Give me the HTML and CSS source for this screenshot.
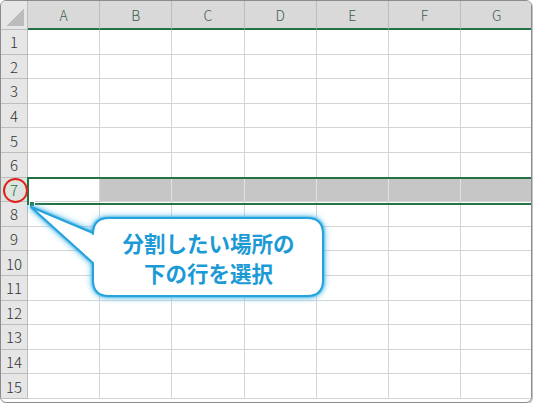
FILE: index.html
```html
<!DOCTYPE html>
<html lang="ja">

<head>
    <meta charset="utf-8">
    <title>行の選択</title>
    <link rel="stylesheet" href="styles.css">
</head>

<body>
    <div class="window">
        <div class="grid">
            <!-- header row -->
            <div class="corner"></div>
            <div class="ch">A</div><div class="ch">B</div><div class="ch">C</div><div class="ch">D</div><div class="ch">E</div><div class="ch">F</div><div class="ch">G</div>

            <div class="rh">1</div><div class="c"></div><div class="c"></div><div class="c"></div><div class="c"></div><div class="c"></div><div class="c"></div><div class="c"></div>
            <div class="rh">2</div><div class="c"></div><div class="c"></div><div class="c"></div><div class="c"></div><div class="c"></div><div class="c"></div><div class="c"></div>
            <div class="rh">3</div><div class="c"></div><div class="c"></div><div class="c"></div><div class="c"></div><div class="c"></div><div class="c"></div><div class="c"></div>
            <div class="rh">4</div><div class="c"></div><div class="c"></div><div class="c"></div><div class="c"></div><div class="c"></div><div class="c"></div><div class="c"></div>
            <div class="rh">5</div><div class="c"></div><div class="c"></div><div class="c"></div><div class="c"></div><div class="c"></div><div class="c"></div><div class="c"></div>
            <div class="rh">6</div><div class="c"></div><div class="c"></div><div class="c"></div><div class="c"></div><div class="c"></div><div class="c"></div><div class="c"></div>
            <!-- selected row -->
            <div class="rh sel">7</div><div class="c"></div><div class="c picked"></div><div class="c picked"></div><div class="c picked"></div><div class="c picked"></div><div class="c picked"></div><div class="c picked"></div>
            <div class="rh">8</div><div class="c"></div><div class="c"></div><div class="c"></div><div class="c"></div><div class="c"></div><div class="c"></div><div class="c"></div>
            <div class="rh">9</div><div class="c"></div><div class="c"></div><div class="c"></div><div class="c"></div><div class="c"></div><div class="c"></div><div class="c"></div>
            <div class="rh">10</div><div class="c"></div><div class="c"></div><div class="c"></div><div class="c"></div><div class="c"></div><div class="c"></div><div class="c"></div>
            <div class="rh">11</div><div class="c"></div><div class="c"></div><div class="c"></div><div class="c"></div><div class="c"></div><div class="c"></div><div class="c"></div>
            <div class="rh">12</div><div class="c"></div><div class="c"></div><div class="c"></div><div class="c"></div><div class="c"></div><div class="c"></div><div class="c"></div>
            <div class="rh">13</div><div class="c"></div><div class="c"></div><div class="c"></div><div class="c"></div><div class="c"></div><div class="c"></div><div class="c"></div>
            <div class="rh">14</div><div class="c"></div><div class="c"></div><div class="c"></div><div class="c"></div><div class="c"></div><div class="c"></div><div class="c"></div>
            <div class="rh">15</div><div class="c"></div><div class="c"></div><div class="c"></div><div class="c"></div><div class="c"></div><div class="c"></div><div class="c"></div>
        </div>

        <!-- selection frame on row 7 with its fill handle -->
        <div class="selection"><span class="handle"></span></div>

        <!-- red mark round the row number -->
        <div class="mark"></div>

        <!-- speech bubble -->
        <svg class="bubble" width="533" height="405" viewBox="0 0 533 405">
            <path d="M109 218 H307 Q323 218 323 234 V280 Q323 296 307 296 H109 Q93 296 93 280 V263 L31 207 L93 233 V234 Q93 218 109 218 Z"
                fill="#fff" stroke="#27a3dc" stroke-width="2" stroke-linejoin="round" />
        </svg>
        <div class="note">
            <p>分割したい場所の</p>
            <p>下の行を選択</p>
        </div>
    </div>
</body>

</html>
```

FILE: styles.css
```css
:root {
    --green: #217346;
    --grid: #d4d4d4;
    --head-line: #bdbdbd;
    --blue: #1c9ad6;
}

* {
    box-sizing: border-box;
}

body {
    margin: 0;
    background: #fff;
    font-family: "Noto Sans CJK JP", "Noto Sans", sans-serif;
}

.window {
    position: relative;
    width: 532px;
    height: 403px;
    border: 1px solid #8c8c8c;
    border-radius: 6px;
    box-shadow: 1px 1px 0 #c4c4c4;
    overflow: hidden;
}

.grid {
    display: grid;
    grid-template-columns: 27px repeat(7, 72.2px);
    grid-template-rows: 29px repeat(15, 24.6px);
}

.corner {
    background: linear-gradient(135deg, transparent 50%, #bcbcbc 50%) no-repeat right 3px bottom 3px / 17px 17px, #e6e6e6;
    border-right: 1px solid var(--head-line);
    border-bottom: 1px solid var(--head-line);
}

.ch {
    display: flex;
    align-items: center;
    justify-content: center;
    background: #d9d9d9;
    border-right: 1px solid #bcbcbc;
    border-bottom: 2px solid var(--green);
    color: #3d5f4a;
    font-size: 14px;
    font-weight: 300;
}

.rh {
    display: flex;
    align-items: center;
    justify-content: center;
    background: #e6e6e6;
    border-right: 1px solid var(--head-line);
    border-bottom: 1px solid var(--head-line);
    color: #333;
    font-size: 15px;
    font-weight: 300;
}

.rh.sel {
    background: #dde4df;
    color: var(--green);
}

.c {
    border-right: 1px solid var(--grid);
    border-bottom: 1px solid var(--grid);
}

.c.picked {
    background: #c6c6c6;
    border-right-color: #e2e2e2;
}

.selection {
    position: absolute;
    left: 26px;
    top: 176px;
    right: -4px;
    height: 28px;
    border: 2px solid var(--green);
}

.handle {
    position: absolute;
    left: 0;
    bottom: -4px;
    width: 6px;
    height: 6px;
    background: var(--green);
    border: 1px solid #fff;
}

.mark {
    position: absolute;
    left: 2px;
    top: 177px;
    width: 25px;
    height: 25px;
    border: 2.5px solid #df2219;
    border-radius: 50%;
}

.bubble {
    position: absolute;
    left: -1px;
    top: -1px;
    filter: drop-shadow(0 0 1.5px #2aa6df) drop-shadow(0 0 3px #5fc3ee);
}

.note {
    position: absolute;
    left: 92px;
    top: 217px;
    width: 231px;
    height: 79px;
    display: flex;
    flex-direction: column;
    justify-content: center;
    align-items: center;
    color: var(--blue);
    font-size: 21.5px;
    font-weight: 700;
    line-height: 30px;
}

.note p {
    margin: 0;
}
```
